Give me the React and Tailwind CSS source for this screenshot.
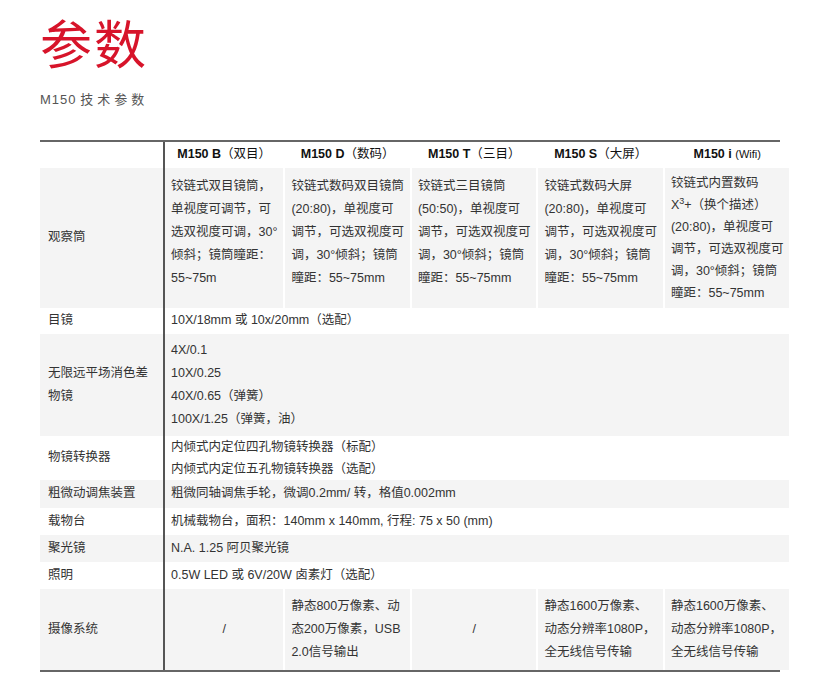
const F = { fontFamily: '"Liberation Sans","Noto Sans CJK SC",sans-serif' };
const G = 'bg-[#f4f4f4]';
function Row({ label, bg, h }) {
  return <div className={`${bg} pl-[8px] flex items-center ${h || ''}`}>{label}</div>;
}
function C({ bg, first, span, center, children, cls = '' }) {
  return (
    <div className={`${bg} ${first ? 'border-l-2 border-[#555]' : 'border-l-2 border-white'} ${span ? 'col-span-5' : ''} ${center ? 'flex items-center justify-center' : ''} px-[6px] whitespace-nowrap ${cls}`}>{children}</div>
  );
}
export default function App() {
  const obs = [
    ['铰链式双目镜筒，', '单视度可调节，可', '选双视度可调，30°', '倾斜；镜筒瞳距：', '55~75m'],
    ['铰链式数码双目镜筒', '(20:80)，单视度可', '调节，可选双视度可', '调，30°倾斜；镜筒', '瞳距：55~75mm'],
    ['铰链式三目镜筒', '(50:50)，单视度可', '调节，可选双视度可', '调，30°倾斜；镜筒', '瞳距：55~75mm'],
    ['铰链式数码大屏', '(20:80)，单视度可', '调节，可选双视度可', '调，30°倾斜；镜筒', '瞳距：55~75mm'],
  ];
  return (
    <div className="w-[820px] h-[699px] bg-white text-[#333] overflow-hidden" style={F}>
      <div className="pl-[40px] pt-[16px]">
        <div className="text-[52px] leading-[60px] text-[#d7142a] tracking-[2px]">参数</div>
        <div className="mt-[14px] text-[13px] text-[#555]"><span className="tracking-[1px]">M150</span> <span className="tracking-[4px]">技术参数</span></div>
      </div>
      <div className="mx-[40px] mt-[30px] border-t-2 border-b-2 border-[#666] text-[12.5px] leading-[23px] grid grid-cols-[123px_repeat(5,1fr)]">
        <Row label="" bg="bg-white" h="h-[26px]" />
        {['M150 B（双目）', 'M150 D（数码）', 'M150 T（三目）', 'M150 S（大屏）'].map((t, i) => (
          <C key={t} bg="bg-white" first={i === 0} center cls="font-bold text-[#111]"><span>{t.split('（')[0]}<span className="font-normal">（{t.split('（')[1]}</span></span></C>
        ))}
        <C bg="bg-white" center cls="font-bold text-[#111]"><span>M150 i <span className="font-normal text-[11px]">(Wifi)</span></span></C>

        <Row label="观察筒" bg={G} />
        {obs.map((l, i) => (
          <C key={i} bg={G} first={i === 0} cls="py-[7px]">{l.map(x => <div key={x}>{x}</div>)}</C>
        ))}
        <C bg={G} cls="py-[4px] leading-[22px]">
          <div>铰链式内置数码</div><div>X<sup className="text-[9px]">3</sup>+（换个描述）</div><div>(20:80)，单视度可</div><div>调节，可选双视度可</div><div>调，30°倾斜；镜筒</div><div>瞳距：55~75mm</div>
        </C>

        <Row label="目镜" bg="bg-white" h="h-[26px]" />
        <C bg="bg-white" first span cls="flex items-center">10X/18mm 或 10x/20mm（选配）</C>

        <Row label={<span className="leading-[23px]">无限远平场消色差<br />物镜</span>} bg={G} />
        <C bg={G} first span cls="py-[5px] leading-[23px]"><div>4X/0.1</div><div>10X/0.25</div><div>40X/0.65（弹簧）</div><div>100X/1.25（弹簧，油）</div></C>

        <Row label="物镜转换器" bg="bg-white" />
        <C bg="bg-white" first span cls="leading-[22px] py-[0px]"><div>内倾式内定位四孔物镜转换器（标配）</div><div>内倾式内定位五孔物镜转换器（选配）</div></C>

        <Row label="粗微动调焦装置" bg={G} h="h-[28px]" />
        <C bg={G} first span cls="flex items-center">粗微同轴调焦手轮，微调0.2mm/ 转，格值0.002mm</C>
        <Row label="载物台" bg="bg-white" h="h-[27px]" />
        <C bg="bg-white" first span cls="flex items-center">机械载物台，面积：140mm x 140mm, 行程: 75 x 50 (mm)</C>
        <Row label="聚光镜" bg={G} h="h-[27px]" />
        <C bg={G} first span cls="flex items-center">N.A. 1.25 阿贝聚光镜</C>
        <Row label="照明" bg="bg-white" h="h-[27px]" />
        <C bg="bg-white" first span cls="flex items-center">0.5W LED 或 6V/20W 卤素灯（选配）</C>

        <Row label="摄像系统" bg={G} />
        <C bg={G} first center>/</C>
        <C bg={G} cls="py-[6px]"><div>静态800万像素、动</div><div>态200万像素，USB</div><div>2.0信号输出</div></C>
        <C bg={G} center>/</C>
        <C bg={G} cls="py-[6px]"><div>静态1600万像素、</div><div>动态分辨率1080P，</div><div>全无线信号传输</div></C>
        <C bg={G} cls="py-[6px]"><div>静态1600万像素、</div><div>动态分辨率1080P，</div><div>全无线信号传输</div></C>
      </div>
    </div>
  );
}
